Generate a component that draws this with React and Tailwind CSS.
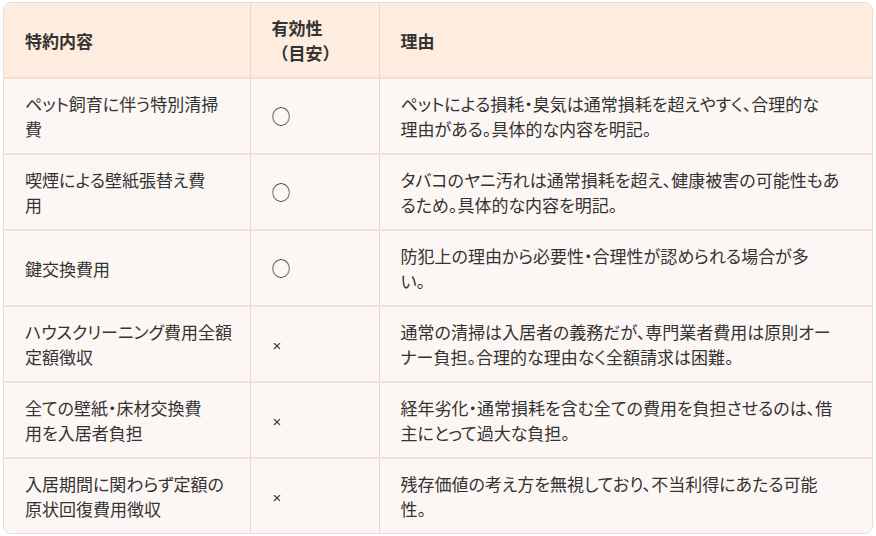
import React from 'react';

const rows = [
  {
    item: ['ペット飼育に伴う特別清掃', '費'],
    valid: '○',
    reason: ['ペットによる損耗・臭気は通常損耗を超えやすく、合理的な', '理由がある。具体的な内容を明記。'],
  },
  {
    item: ['喫煙による壁紙張替え費', '用'],
    valid: '○',
    reason: ['タバコのヤニ汚れは通常損耗を超え、健康被害の可能性もあ', 'るため。具体的な内容を明記。'],
  },
  {
    item: ['鍵交換費用'],
    valid: '○',
    reason: ['防犯上の理由から必要性・合理性が認められる場合が多', 'い。'],
  },
  {
    item: ['ハウスクリーニング費用全額', '定額徴収'],
    valid: '×',
    reason: ['通常の清掃は入居者の義務だが、専門業者費用は原則オー', 'ナー負担。合理的な理由なく全額請求は困難。'],
  },
  {
    item: ['全ての壁紙・床材交換費', '用を入居者負担'],
    valid: '×',
    reason: ['経年劣化・通常損耗を含む全ての費用を負担させるのは、借', '主にとって過大な負担。'],
  },
  {
    item: ['入居期間に関わらず定額の', '原状回復費用徴収'],
    valid: '×',
    reason: ['残存価値の考え方を無視しており、不当利得にあたる可能', '性。'],
  },
];

const Lines = ({ lines }) =>
  lines.map((l, i) => (
    <React.Fragment key={i}>
      {i > 0 && <br />}
      {l}
    </React.Fragment>
  ));

const App = () => {
  return (
    <div className="bg-white pt-[2px] px-[3px] w-[876px] h-[536px]">
      <div
        className="rounded-lg border border-[#eadbd2] overflow-hidden text-[#333333] [font-feature-settings:'palt']"
        style={{ fontFamily: '"Noto Sans CJK JP", "Noto Sans", sans-serif' }}
      >
        <table className="w-full table-fixed border-collapse text-[17px] leading-[25px]">
          <colgroup>
            <col className="w-[246px]" />
            <col className="w-[129px]" />
            <col />
          </colgroup>
          <thead>
            <tr className="bg-[#feecdf] border-b-2 border-[#f0e0d7]">
              <th className="px-[21px] py-3 text-left font-bold align-middle border-r border-[#e9d6cb]">特約内容</th>
              <th className="px-[21px] py-3 text-left font-bold align-middle border-r border-[#e9d6cb] whitespace-nowrap [font-feature-settings:normal]">
                有効性
                <br />
                （目安）
              </th>
              <th className="px-[21px] py-3 text-left font-bold align-middle">理由</th>
            </tr>
          </thead>
          <tbody className="bg-[#fcf7f4]">
            {rows.map((r, i) => (
              <tr key={i} className={i < rows.length - 1 ? 'border-b-2 border-[#f0e3db]' : ''}>
                <td className="px-[21px] py-3 align-middle whitespace-nowrap border-r border-[#e9d6cb]">
                  <Lines lines={r.item} />
                </td>
                <td className="px-[21px] py-3 align-middle border-r border-[#e9d6cb]">
                  {r.valid === '○' ? (
                    <span className="text-[19px]">○</span>
                  ) : (
                    <span className="text-[15px] pl-[1px]" style={{ fontFamily: '"Liberation Sans", sans-serif' }}>×</span>
                  )}
                </td>
                <td className="px-[21px] py-3 align-middle whitespace-nowrap">
                  <Lines lines={r.reason} />
                </td>
              </tr>
            ))}
          </tbody>
        </table>
      </div>
    </div>
  );
};

export default App;
